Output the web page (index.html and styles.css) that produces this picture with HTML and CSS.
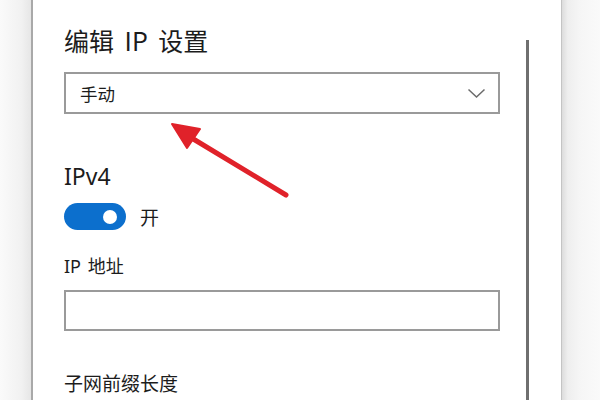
FILE: index.html
```html
<!DOCTYPE html>
<html lang="zh-CN">
<head>
<meta charset="utf-8">
<link rel="stylesheet" href="styles.css">
</head>
<body>
<div class="screen">
  <div class="gutter"></div>
  <div class="panel">
    <div class="content">
      <h1 class="title">编辑 IP 设置</h1>
      <div class="select">
        <span class="select-text">手动</span>
        <svg class="chevron" width="19" height="11" viewBox="0 0 19 11"><path d="M1.5 1.5 L9.5 9 L17.5 1.5" fill="none" stroke="#6b6b6b" stroke-width="1.5"/></svg>
      </div>
      <h2 class="section">IPv4</h2>
      <div class="toggle-row">
        <div class="toggle"><div class="knob"></div></div>
        <span class="toggle-label">开</span>
      </div>
      <div class="label">IP 地址</div>
      <div class="input"></div>
      <div class="label label-gap">子网前缀长度</div>
    </div>
    <div class="track"><div class="thumb"></div></div>
  </div>
  <div class="shade"></div>
  <svg class="arrow" width="600" height="400" viewBox="0 0 600 400">
    <line x1="286" y1="195" x2="190" y2="137" stroke="#e0222a" stroke-width="5" stroke-linecap="round"/>
    <polygon points="172,124 200,129 187,148" fill="#e0222a" stroke="#e0222a" stroke-width="2" stroke-linejoin="round"/>
  </svg>
</div>
</body>
</html>
```

FILE: styles.css
```css
* { box-sizing: border-box; }
html, body { margin: 0; padding: 0; }
body {
  width: 600px;
  height: 400px;
  overflow: hidden;
  background: #fff;
  font-family: "Noto Sans", "Noto Sans CJK SC", sans-serif;
  color: #1f1f1f;
}
.screen {
  position: relative;
  display: flex;
  width: 600px;
  height: 400px;
}
.gutter {
  width: 31px;
  background: linear-gradient(to right, #fafafa, #f1f1f1 70%, #e6e6e6);
}
.panel {
  width: 531px;
  display: flex;
  background: #fff;
  border-left: 2px solid #a9a9a9;
  border-right: 1px solid #c4c4c4;
}
.content {
  flex: 1;
  padding-left: 31px;
  padding-right: 20px;
}
.shade {
  flex: 1;
  background: linear-gradient(to right, #dcdcdc, #eeeeee 15%, #f6f6f6 50%, #fafafa);
}
.title {
  margin: 24px 0 0;
  font-size: 25px;
  line-height: 32px;
  font-weight: 400;
  word-spacing: 5px;
  color: #1c1c1c;
  font-family: "Noto Sans CJK SC", sans-serif;
}
.select {
  margin-top: 16px;
  width: 436px;
  height: 42px;
  border: 2px solid #9a9a9a;
  display: flex;
  align-items: center;
  justify-content: space-between;
  padding: 0 12px 0 14px;
}
.select-text {
  font-family: "Noto Sans CJK SC", sans-serif;
  font-size: 17.5px;
  color: #1c1c1c;
}
.chevron { display: block; margin-top: 1px; }
.section {
  margin: 47px 0 0;
  font-size: 23px;
  line-height: 30px;
  font-weight: 400;
  color: #1c1c1c;
}
.toggle-row {
  margin-top: 12px;
  height: 27px;
  display: flex;
  align-items: center;
}
.toggle {
  width: 62px;
  height: 27px;
  border-radius: 14px;
  background: #0c6fcd;
  display: flex;
  align-items: center;
  justify-content: flex-end;
  padding-right: 9px;
}
.knob {
  width: 14px;
  height: 14px;
  border-radius: 50%;
  background: #fff;
}
.toggle-label {
  margin-left: 14px;
  font-family: "Noto Sans CJK SC", sans-serif;
  font-size: 19px;
  color: #1c1c1c;
}
.label {
  margin-top: 24px;
  font-family: "Noto Sans", "Noto Sans CJK SC", sans-serif;
  font-size: 18px;
  line-height: 24px;
  word-spacing: 2px;
  color: #1c1c1c;
}
.input {
  margin-top: 12px;
  width: 436px;
  height: 41px;
  border: 2px solid #9a9a9a;
}
.label-gap {
  margin-top: 41px;
  font-size: 19px;
}
.track {
  width: 36px;
  padding-top: 40px;
  padding-left: 1px;
  display: flex;
  justify-content: flex-start;
}
.thumb {
  width: 3px;
  height: 100%;
  background: #6f6f6f;
}
.arrow {
  position: absolute;
  left: 0;
  top: 0;
  pointer-events: none;
}
```
